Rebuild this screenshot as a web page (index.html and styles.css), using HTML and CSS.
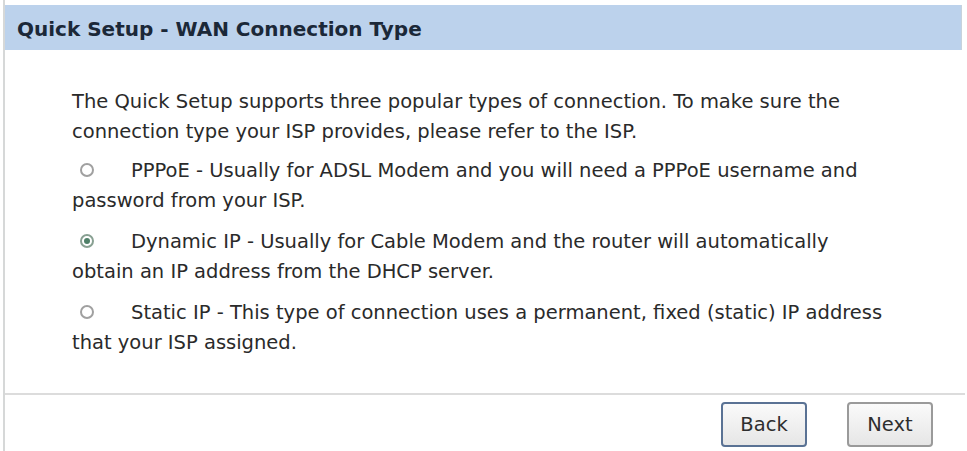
FILE: index.html
```html
<!DOCTYPE html>
<html>
<head>
<meta charset="utf-8">
<link rel="stylesheet" href="styles.css">
</head>
<body>
<div class="frame">
  <div class="title">Quick Setup - WAN Connection Type</div>
  <div class="content">
    <p class="intro">The Quick Setup supports three popular types of connection. To make sure the<br>connection type your ISP provides, please refer to the ISP.</p>
    <p class="opt"><span class="radio"></span><span class="label">PPPoE - Usually for ADSL Modem and you will need a PPPoE username and</span><br>password from your ISP.</p>
    <p class="opt"><span class="radio checked"></span><span class="label">Dynamic IP - Usually for Cable Modem and the router will automatically</span><br>obtain an IP address from the DHCP server.</p>
    <p class="opt"><span class="radio"></span><span class="label">Static IP - This type of connection uses a permanent, fixed (static) IP address</span><br>that your ISP assigned.</p>
  </div>
  <div class="footer">
    <button class="btn btn-default">Back</button>
    <button class="btn">Next</button>
  </div>
</div>
</body>
</html>
```
FILE: styles.css
```css
html, body {
  margin: 0;
  padding: 0;
  background: #ffffff;
}
body {
  font-family: "DejaVu Sans", Verdana, sans-serif;
  color: #2a2a2a;
  height: 451px;
  overflow: hidden;
}
.frame {
  margin-left: 3px;
  border-left: 2px solid #d6d8d8;
  padding-top: 5px;
  height: 446px;
}
.title {
  height: 45px;
  margin-right: 5px;
  background: #bcd2ec;
  border-right: 1px solid #c8d2dc;
  color: #1b2838;
  font-weight: bold;
  font-size: 20px;
  line-height: 48px;
  padding-left: 12px;
}
.content {
  padding-left: 67px;
  padding-top: 37px;
  height: 306px;
  font-size: 19.5px;
  line-height: 30px;
}
.content p {
  margin: 0;
}
.opt {
  margin-top: 9px !important;
}
.opt + .opt {
  margin-top: 11px !important;
}
.radio {
  display: inline-block;
  width: 10px;
  height: 10px;
  border: 2px solid #a0a0a0;
  border-radius: 50%;
  margin-left: 8px;
  margin-right: 37px;
  vertical-align: 0px;
  box-sizing: content-box;
  position: relative;
}
.radio.checked {
  border-color: #88a092;
}
.radio.checked::after {
  content: "";
  position: absolute;
  left: 2px;
  top: 2px;
  width: 6px;
  height: 6px;
  border-radius: 50%;
  background: #4f8068;
}
.footer {
  border-top: 2px solid #dcdcdc;
  margin-right: 2px;
  display: flex;
  justify-content: flex-end;
  gap: 40px;
  padding-top: 7px;
  padding-right: 32px;
}
.btn {
  width: 86px;
  height: 45px;
  font-family: "DejaVu Sans", Verdana, sans-serif;
  font-size: 19.5px;
  color: #2e2e2e;
  background: linear-gradient(#fafafa, #e6e6e6);
  border: 2px solid #9a9a9a;
  border-radius: 4px;
  padding: 0;
}
.btn-default {
  border-color: #5a7294;
}
```
